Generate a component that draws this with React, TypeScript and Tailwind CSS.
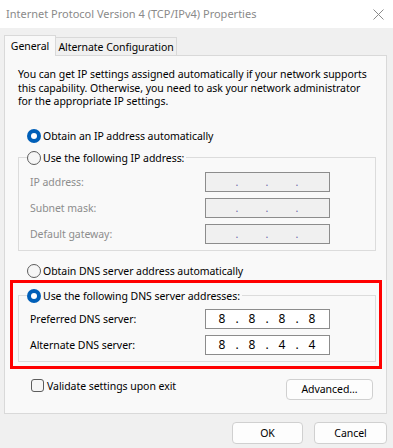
import React from 'react';

const font = { fontFamily: '"Noto Sans", "Open Sans", sans-serif' };

function Radio({ checked = false }: { checked?: boolean }) {
  return checked ? (
    <span className="flex h-[14px] w-[14px] shrink-0 items-center justify-center rounded-full bg-[#005fb8]">
      <span className="h-[6px] w-[6px] rounded-full bg-white" />
    </span>
  ) : (
    <span className="h-[14px] w-[14px] shrink-0 rounded-full border border-[#5d5d5d] bg-[#f6f6f6]" />
  );
}

function RadioRow({ label, checked = false }: { label: string; checked?: boolean }) {
  return (
    <div className="flex h-[16px] items-center gap-[1px] whitespace-nowrap text-black">
      <Radio checked={checked} />
      <span className="pl-[1px]">{label}</span>
    </div>
  );
}

function IpBox({ parts, disabled = false }: { parts: string[]; disabled?: boolean }) {
  return (
    <div
      className={
        disabled
          ? 'flex h-[20px] w-[125px] items-center border border-[#8c8c8c] bg-[#f0f0f0] px-[4px] text-[#6b5fa8]'
          : 'flex h-[20px] w-[125px] items-center border border-[#8c8c8c] bg-white px-[4px] text-[12px] text-black'
      }
    >
      {parts.map((p, i) => (
        <React.Fragment key={i}>
          {i > 0 && <span className="w-[6px] text-center">.</span>}
          <span className="w-[24px] text-center">{p}</span>
        </React.Fragment>
      ))}
    </div>
  );
}

function FieldRow({ label, parts, disabled = false }: { label: string; parts: string[]; disabled?: boolean }) {
  return (
    <div className="flex items-center whitespace-nowrap">
      <span className={disabled ? 'w-[186px] pl-[11px] text-[#8d8d8d]' : 'w-[186px] pl-[11px] text-black'}>{label}</span>
      <IpBox parts={parts} disabled={disabled} />
    </div>
  );
}

export default function App() {
  const empty = ['', '', '', ''];
  return (
    <div
      className="h-[448px] w-[393px] overflow-hidden bg-[#f0f0f0] text-[10.5px] leading-[16px] tracking-[-0.05px]"
      style={font}
    >
      {/* title bar */}
      <div className="flex h-[28px] items-center justify-between bg-white pl-[6px] pr-[9px]">
        <span className="whitespace-nowrap text-[11px] tracking-normal text-[#8a8a8a]">
          Internet Protocol Version 4 (TCP/IPv4) Properties
        </span>
        <svg width="11" height="11" viewBox="0 0 11 11" className="text-[#8a8a8a]">
          <path d="M0.5 0.5 L10.5 10.5 M10.5 0.5 L0.5 10.5" stroke="currentColor" strokeWidth="1" />
        </svg>
      </div>

      {/* tabs */}
      <div className="mt-[7px] flex items-end whitespace-nowrap pl-[4px]">
        <div className="relative z-10 -mb-[1px] flex h-[21px] w-[52px] items-start justify-center border border-b-0 border-[#d9d9d9] bg-[#f9f9f9] pt-[2px] text-black">
          General
        </div>
        <div className="flex h-[18px] w-[121px] items-center justify-center border border-l-0 border-b-0 border-[#d9d9d9] bg-[#f0f0f0] text-black">
          Alternate Configuration
        </div>
      </div>

      {/* panel */}
      <div className="ml-[4px] flex h-[359px] w-[383px] flex-col border border-[#d9d9d9] bg-[#f9f9f9] pt-[12px] text-black">
        <p className="whitespace-nowrap pl-[13px] leading-[13.5px]">
          You can get IP settings assigned automatically if your network supports
          <br />
          this capability. Otherwise, you need to ask your network administrator
          <br />
          for the appropriate IP settings.
        </p>

        <div className="ml-[22px] mt-[19px]">
          <RadioRow label="Obtain an IP address automatically" checked />
        </div>

        <fieldset className="ml-[13px] mt-[6px] w-[358px] border border-[#dcdcdc] pb-[6px]">
          <legend className="ml-[8px] pr-[2px]">
            <RadioRow label="Use the following IP address:" />
          </legend>
          <div className="mt-[6px] flex flex-col gap-[6px]">
            <FieldRow label="IP address:" parts={empty} disabled />
            <FieldRow label="Subnet mask:" parts={empty} disabled />
            <FieldRow label="Default gateway:" parts={empty} disabled />
          </div>
        </fieldset>

        <div className="ml-[22px] mt-[12px]">
          <RadioRow label="Obtain DNS server address automatically" />
        </div>

        <div className="ml-[5px] mt-[1px] w-[372px] border-[3px] border-[#ff0000] pb-[4px] pl-[5px] pt-[5px]">
          <fieldset className="w-[358px] border border-[#dcdcdc] pb-[6px]">
            <legend className="ml-[8px] pr-[2px]">
              <RadioRow label="Use the following DNS server addresses:" checked />
            </legend>
            <div className="mt-[5px] flex flex-col gap-[6px]">
              <FieldRow label="Preferred DNS server:" parts={['8', '8', '8', '8']} />
              <FieldRow label="Alternate DNS server:" parts={['8', '8', '4', '4']} />
            </div>
          </fieldset>
        </div>

        <div className="mt-[9px] flex items-start justify-between whitespace-nowrap pl-[26px] pr-[13px]">
          <div className="flex items-center gap-[2px]">
            <span className="h-[13px] w-[13px] rounded-[3px] border border-[#5d5d5d] bg-[#f6f6f6]" />
            <span className="pl-[1px]">Validate settings upon exit</span>
          </div>
          <button className="mt-[1px] h-[21px] w-[87px] rounded-[4px] border border-[#d0d0d0] bg-[#fdfdfd] text-black">
            Advanced...
          </button>
        </div>
      </div>

      {/* footer buttons */}
      <div className="mt-[8px] flex justify-end gap-[11px] pr-[6px]">
        <button className="h-[22px] w-[71px] rounded-[4px] border border-[#d0d0d0] bg-[#fdfdfd] text-black">OK</button>
        <button className="h-[22px] w-[73px] rounded-[4px] border border-[#d0d0d0] bg-[#fdfdfd] text-black">Cancel</button>
      </div>
    </div>
  );
}
